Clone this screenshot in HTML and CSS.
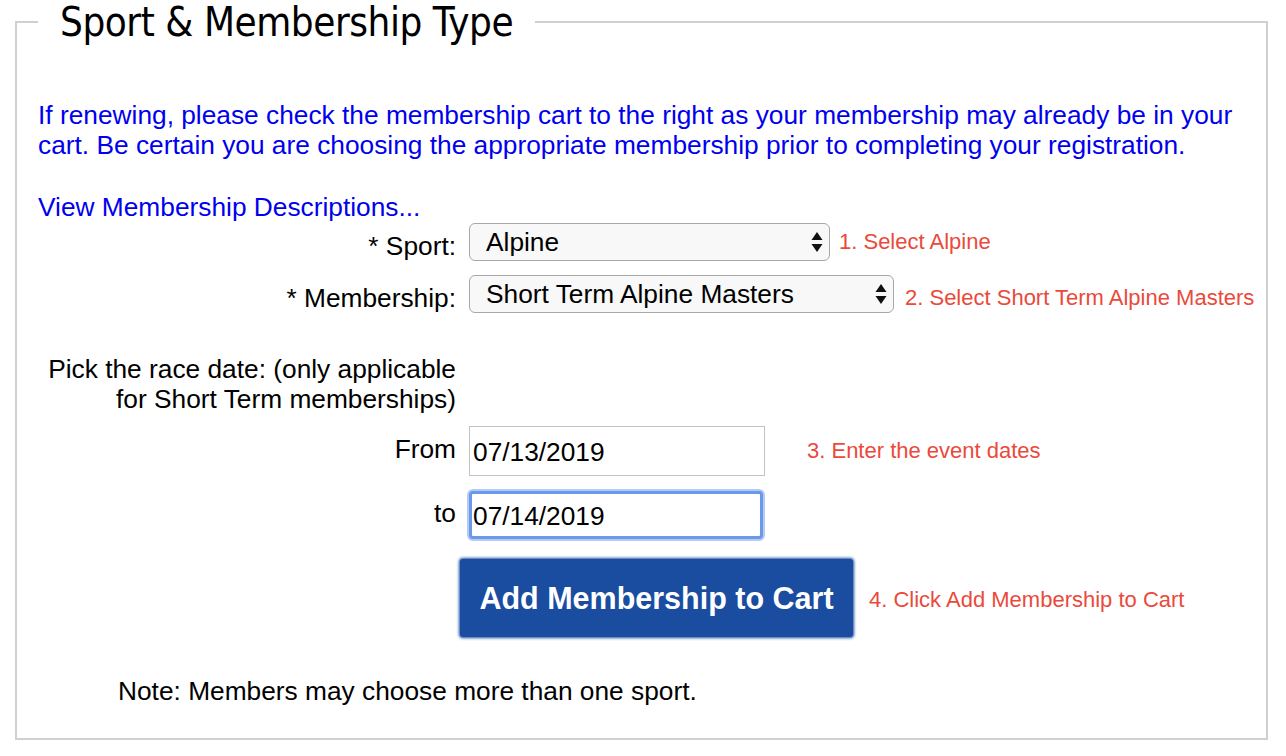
FILE: index.html
```html
<!DOCTYPE html>
<html>
<head>
    <link rel="stylesheet" href="styles.css">
</head>
<body>
    <fieldset class="box">
        <legend>Sport &amp; Membership Type</legend>

        <p class="notice">If renewing, please check the membership cart to the right as your membership may already be in your cart. Be certain you are choosing the appropriate membership prior to completing your registration.</p>

        <a class="desc-link" href="#">View Membership Descriptions...</a>

        <div class="row row-sport">
            <label class="lbl" for="sport">* Sport:</label>
            <div class="select sport-select">
                <span>Alpine</span>
                <svg class="arrows" width="12" height="22" viewBox="0 0 12 22"><path d="M6 1 L11.5 9 H0.5 Z M6 21 L11.5 13 H0.5 Z" fill="#111"/></svg>
            </div>
            <span class="hint">1. Select Alpine</span>
        </div>

        <div class="row row-member">
            <label class="lbl" for="membership">* Membership:</label>
            <div class="select member-select">
                <span>Short Term Alpine Masters</span>
                <svg class="arrows" width="12" height="22" viewBox="0 0 12 22"><path d="M6 1 L11.5 9 H0.5 Z M6 21 L11.5 13 H0.5 Z" fill="#111"/></svg>
            </div>
            <span class="hint">2. Select Short Term Alpine Masters</span>
        </div>

        <div class="row row-pick">
            <div class="lbl">Pick the race date: (only applicable<br>for Short Term memberships)</div>
        </div>

        <div class="row row-from">
            <label class="lbl" for="from">From</label>
            <input class="date" id="from" type="text" value="07/13/2019">
            <span class="hint hint-dates">3. Enter the event dates</span>
        </div>

        <div class="row row-to">
            <label class="lbl" for="to">to</label>
            <input class="date focused" id="to" type="text" value="07/14/2019">
        </div>

        <div class="row row-btn">
            <div class="lbl"></div>
            <button class="add-btn">Add Membership to Cart</button>
            <span class="hint">4. Click Add Membership to Cart</span>
        </div>

        <p class="note">Note: Members may choose more than one sport.</p>
    </fieldset>
</body>
</html>
```

FILE: styles.css
```css
body {
    margin: 0;
    padding: 0 18px 0 15px;
    font-family: "Liberation Sans", Arial, sans-serif;
    background: #fff;
}
.box {
    margin: 0;
    padding: 0 10px 0 21px;
    border: 2px solid #d0d0d0;
    height: 740px;
    box-sizing: border-box;
}
legend {
    font-family: "DejaVu Sans Condensed", "DejaVu Sans", Verdana, sans-serif;
    font-stretch: condensed;
    font-size: 40px;
    padding: 0 22px;
    line-height: 44px;
    color: #000;
    letter-spacing: -0.45px;
}
.notice {
    color: #0000ee;
    font-size: 26.3px;
    line-height: 30px;
    margin: 56px 0 32px 0;
}
.desc-link {
    display: block;
    color: #0000ee;
    font-size: 26.3px;
    text-decoration: none;
    line-height: 30px;
}
.row {
    display: flex;
    align-items: center;
}
.lbl {
    width: 418px;
    text-align: right;
    font-size: 26.3px;
    line-height: 30px;
    margin-right: 13px;
    flex-shrink: 0;
}
.select {
    display: flex;
    align-items: center;
    justify-content: space-between;
    height: 38px;
    box-sizing: border-box;
    border: 1px solid #a8a8a8;
    border-radius: 6px;
    background: #f8f8f8;
    padding: 0 6px 0 16px;
    font-size: 26.3px;
}
.sport-select {
    width: 361px;
}
.member-select {
    width: 425px;
}
.hint {
    color: #ea4a3b;
    font-size: 22px;
    margin-left: 9px;
}
.row-sport {
    margin-top: 1px;
}
.row-sport .lbl {
    margin-top: 8px;
}
.row-member {
    margin-top: 14px;
}
.row-member .lbl,
.row-member .hint {
    margin-top: 8px;
}
.row-member .hint {
    margin-left: 11px;
}
.row-pick {
    margin-top: 41px;
}
.row-from {
    margin-top: 12px;
}
.date {
    width: 296px;
    height: 50px;
    box-sizing: border-box;
    border: 1px solid #c3c3c3;
    padding: 2px 0 0 3px;
    font-family: "Liberation Sans", Arial, sans-serif;
    font-size: 26.3px;
    margin: 0;
    outline: none;
}
.row-from .lbl {
    margin-top: -4px;
}
.hint-dates {
    margin-left: 42px;
}
.row-to {
    margin-top: 15px;
}
.row-to .lbl {
    margin-top: -4px;
}
.focused {
    border: 3px solid #6a98ea;
    border-radius: 4px;
    box-shadow: 0 0 0 2px #b3cbf4;
    padding-left: 1px;
    width: 294px;
    height: 48px;
}
.row-btn {
    margin-top: 20px;
}
.row-btn .lbl {
    width: 410px;
    margin-right: 12px;
}
.add-btn {
    width: 393px;
    height: 78px;
    background: #1a4ca0;
    color: #fff;
    border: none;
    border-radius: 3px;
    box-shadow: 0 0 3px 1px #1a4ca0;
    font-family: "Liberation Sans", Arial, sans-serif;
    font-weight: bold;
    font-size: 30.5px;
    padding: 0;
    cursor: pointer;
}
.row-btn .hint {
    margin-left: 16px;
    margin-top: 4px;
}
.note {
    font-size: 26.3px;
    line-height: 30px;
    margin: 39px 0 0 80px;
}
```
